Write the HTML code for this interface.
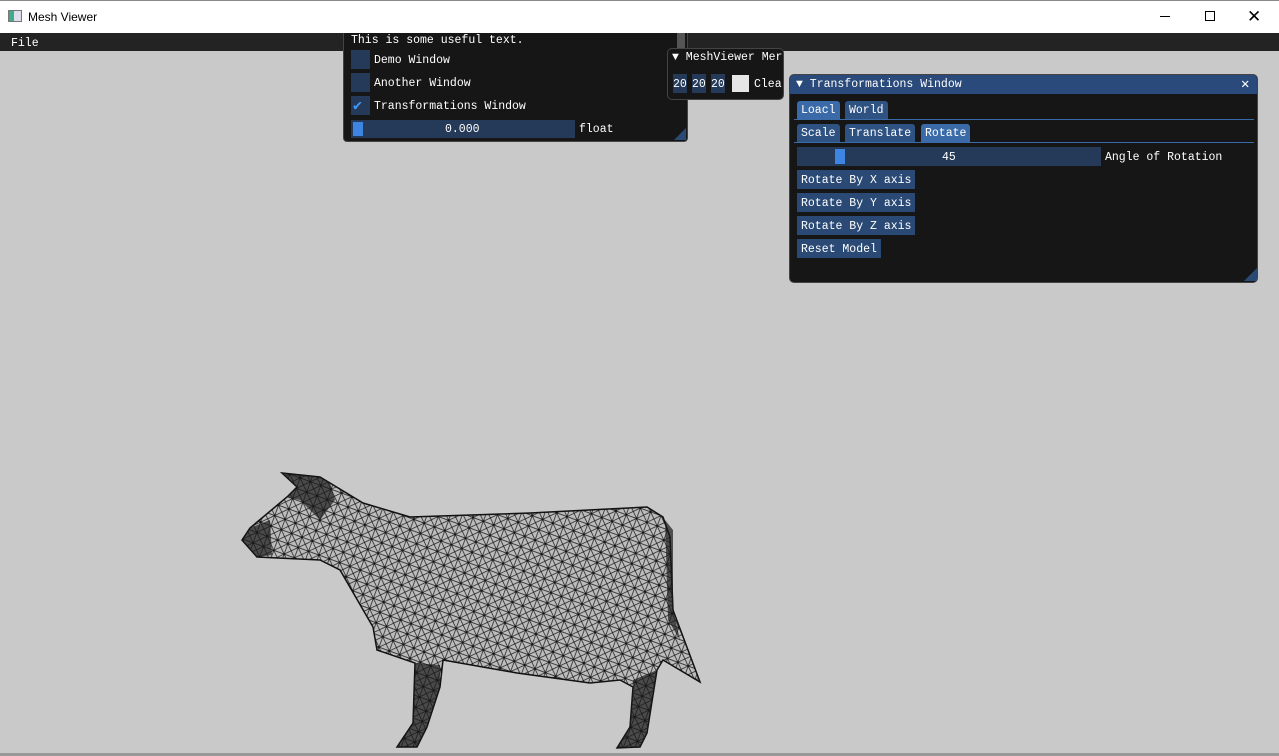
<!DOCTYPE html>
<html><head><style>
*{margin:0;padding:0;box-sizing:border-box}
body{width:1279px;height:756px;background:#c9c9c9;position:relative;overflow:hidden;font-family:"Liberation Mono",monospace;font-size:11.5px;color:#fff}
.a{position:absolute}
.btn{position:absolute;background:#2a4a75;color:#fff;height:19px;line-height:21px;padding:0 4px}
.tab{position:absolute;background:#2e5282;height:18px;line-height:20px;padding:0 4px;border-radius:3px 3px 0 0}
.cb{position:absolute;width:19px;height:19px;background:#243a58}
</style></head><body>
<div class="a" style="left:0;top:0;width:1279px;height:33px;background:#fff;border-top:1px solid #888"></div>
<div class="a" style="left:8px;top:10px;width:14px;height:12px;border:1px solid #777;background:linear-gradient(90deg,#4a8 0 40%,#dde 40%)"></div>
<div class="a" style="left:28px;top:10px;font-family:'Liberation Sans',sans-serif;font-size:12px;color:#000">Mesh Viewer</div>
<div class="a" style="left:1160px;top:16px;width:10px;height:1px;background:#000"></div>
<div class="a" style="left:1205px;top:11px;width:10px;height:10px;border:1px solid #000"></div>
<div class="a" style="left:1247px;top:7px;font-family:'Liberation Sans',sans-serif;font-size:17px;color:#000">✕</div>
<div class="a" style="left:0;top:33px;width:1279px;height:18px;background:#232323"></div>
<div class="a" style="left:11px;top:37px">File</div>

<div class="a" style="left:343px;top:33px;width:345px;height:109px;background:#161616;border:1px solid #444;border-top:none;border-radius:0 0 4px 4px"></div>
<div class="a" style="left:677px;top:33px;width:8px;height:16px;background:#555"></div>
<div class="a" style="left:351px;top:34px">This is some useful text.</div>
<div class="cb" style="left:351px;top:50px"></div><div class="a" style="left:374px;top:54px">Demo Window</div>
<div class="cb" style="left:351px;top:73px"></div><div class="a" style="left:374px;top:77px">Another Window</div>
<div class="cb" style="left:351px;top:96px"></div><div class="a" style="left:353px;top:96px;color:#4296fa;font-size:15px">✔</div><div class="a" style="left:374px;top:100px">Transformations Window</div>
<div class="a" style="left:351px;top:120px;width:224px;height:18px;background:#243a58"></div>
<div class="a" style="left:353px;top:122px;width:10px;height:14px;background:#3d85e0"></div>
<div class="a" style="left:445px;top:123px">0.000</div>
<div class="a" style="left:579px;top:123px">float</div>
<div class="a" style="left:674px;top:128px;width:0;height:0;border-left:12px solid transparent;border-bottom:12px solid #2a4a75"></div>

<div class="a" style="left:667px;top:48px;width:117px;height:52px;background:#161616;border:1px solid #444;border-radius:5px"></div>
<div class="a" style="left:672px;top:51px">▼ MeshViewer Mer</div>
<div class="a" style="left:673px;top:74px;background:#243a58;height:19px;line-height:21px">20</div>
<div class="a" style="left:692px;top:74px;background:#243a58;height:19px;line-height:21px">20</div>
<div class="a" style="left:711px;top:74px;background:#243a58;height:19px;line-height:21px">20</div>
<div class="a" style="left:732px;top:75px;width:17px;height:17px;background:#e6e6e6"></div>
<div class="a" style="left:754px;top:78px;width:28px;overflow:hidden">Clea</div>

<div class="a" style="left:789px;top:74px;width:469px;height:209px;background:#161616;border:1px solid #444;border-radius:5px;overflow:hidden">
<div style="height:19px;background:#294a7a"></div></div>
<div class="a" style="left:796px;top:78px">▼ Transformations Window</div>
<div class="a" style="left:1241px;top:76px;font-size:14px">✕</div>
<div class="tab" style="left:797px;top:101px;height:19px;background:#3a6aa8">Loacl</div>
<div class="tab" style="left:845px;top:101px;height:19px">World</div>
<div class="a" style="left:794px;top:119px;width:460px;height:1px;background:#3a6aa8"></div>
<div class="tab" style="left:797px;top:124px;height:19px">Scale</div>
<div class="tab" style="left:845px;top:124px;height:19px">Translate</div>
<div class="tab" style="left:921px;top:124px;height:19px;background:#3a6aa8">Rotate</div>
<div class="a" style="left:794px;top:142px;width:460px;height:1px;background:#3a6aa8"></div>
<div class="a" style="left:797px;top:147px;width:304px;height:19px;background:#243a58"></div>
<div class="a" style="left:835px;top:149px;width:10px;height:15px;background:#3d85e0"></div>
<div class="a" style="left:942px;top:151px">45</div>
<div class="a" style="left:1105px;top:151px">Angle of Rotation</div>
<div class="btn" style="left:797px;top:170px">Rotate By X axis</div>
<div class="btn" style="left:797px;top:193px">Rotate By Y axis</div>
<div class="btn" style="left:797px;top:216px">Rotate By Z axis</div>
<div class="btn" style="left:797px;top:239px">Reset Model</div>
<div class="a" style="left:1244px;top:268px;width:0;height:0;border-left:13px solid transparent;border-bottom:13px solid #2a4a75"></div>

<svg class="a" style="left:0;top:0" width="1279" height="756">
<defs><pattern id="m" width="11" height="11" patternUnits="userSpaceOnUse" patternTransform="rotate(20)">
<rect width="11" height="11" fill="#bcbcbc"/><path d="M0 0L11 11M11 0L0 11M0 5.5H11M5.5 0V11" stroke="#111" stroke-width="0.7"/></pattern></defs>
<path fill="url(#m)" stroke="#111" stroke-width="1.5" d="M282 473L320 477L330 483L363 503L410 517L530 513L647 507L663 517L670 537L673 610L700 682L663 660L657 670L647 733L640 747L617 748L630 727L633 687L620 680L590 683L517 673L443 660L440 687L427 727L417 747L397 747L413 723L415 663L377 650L373 627L340 570L320 560L257 557L242 540L250 528L287 497L297 487Z"/>
<g fill="#1a1a1a" opacity="0.7">
<path d="M282 473L320 477L330 483L335 500L320 520L300 500L287 497L297 487Z"/>
<path d="M242 540L250 528L270 520L272 555L257 557Z"/>
<path d="M415 663L440 665L440 687L427 727L417 747L397 747L413 723Z"/>
<path d="M633 680L657 670L647 733L640 747L617 748L630 727Z"/>
<path d="M665 520L673 530L673 610L680 640L668 620Z"/>
</g>
</svg>
<div class="a" style="left:0;top:753px;width:1279px;height:3px;background:#999"></div>
</body></html>
